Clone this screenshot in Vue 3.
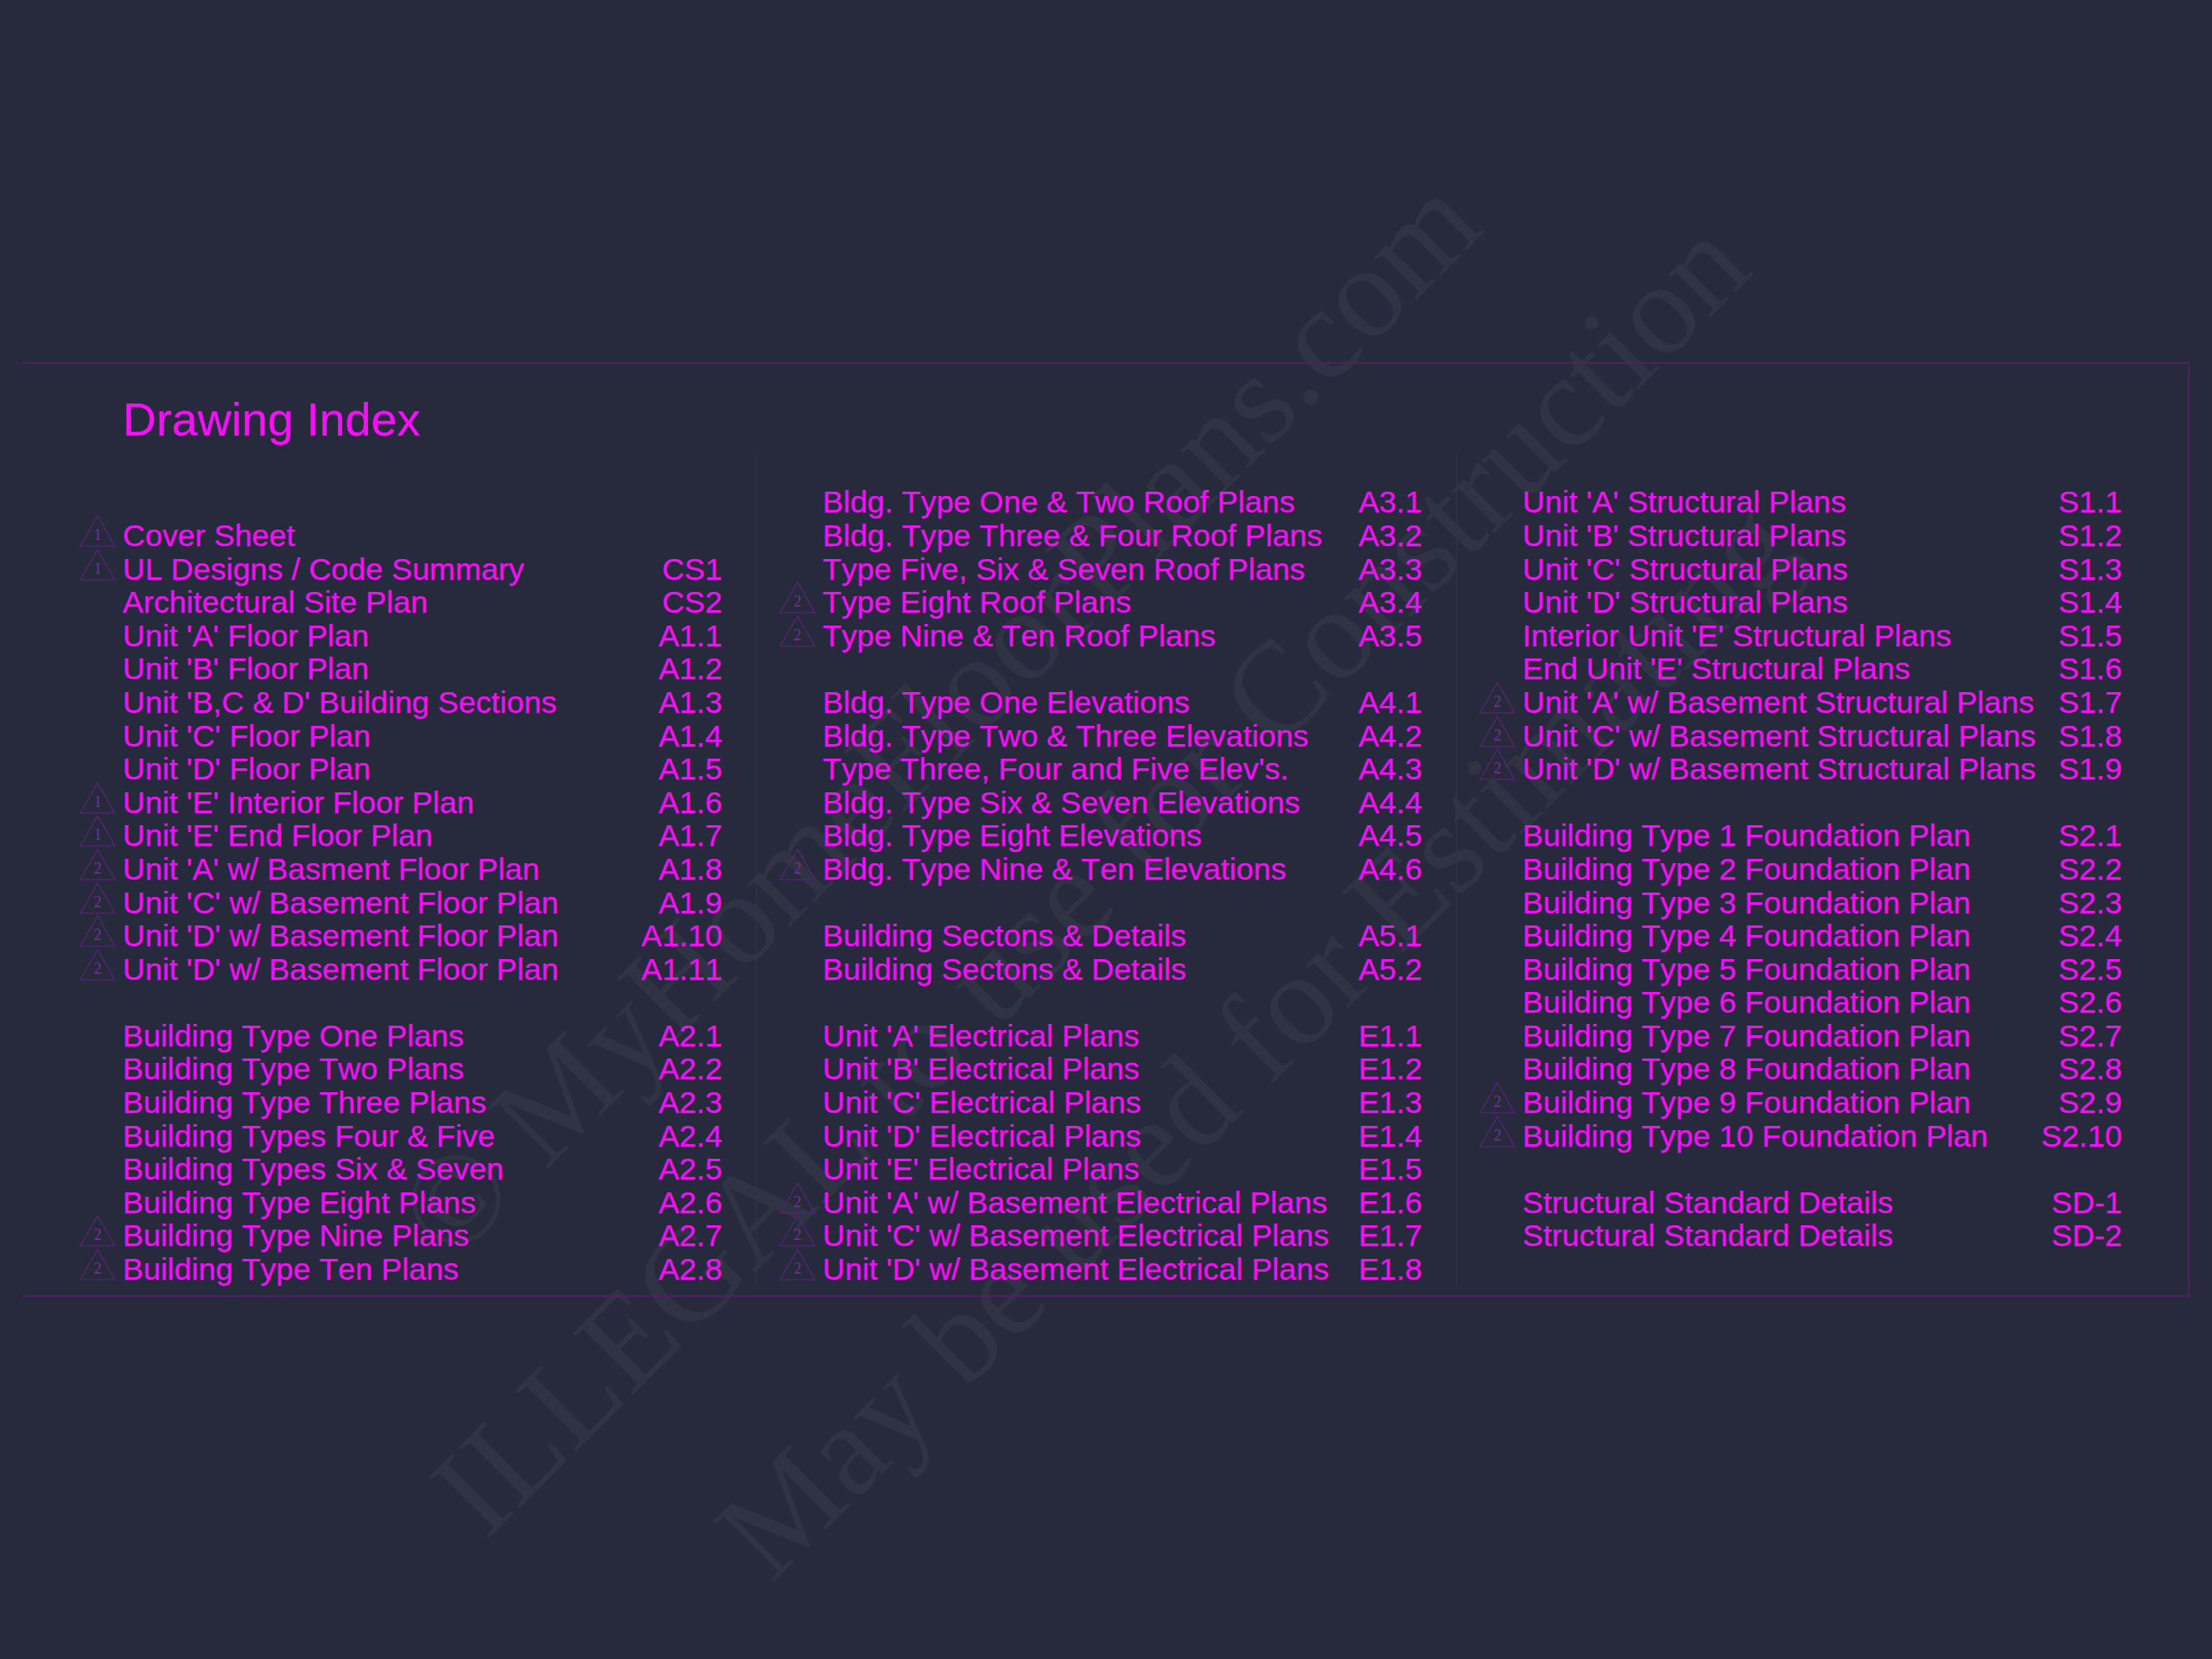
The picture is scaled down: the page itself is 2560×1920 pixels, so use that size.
<script setup>
const col1 = [
  null,
  ['Cover Sheet', '', 1],
  ['UL Designs / Code Summary', 'CS1', 1],
  ['Architectural Site Plan', 'CS2'],
  ["Unit 'A' Floor Plan", 'A1.1'],
  ["Unit 'B' Floor Plan", 'A1.2'],
  ["Unit 'B,C & D' Building Sections", 'A1.3'],
  ["Unit 'C' Floor Plan", 'A1.4'],
  ["Unit 'D' Floor Plan", 'A1.5'],
  ["Unit 'E' Interior Floor Plan", 'A1.6', 1],
  ["Unit 'E' End Floor Plan", 'A1.7', 1],
  ["Unit 'A' w/ Basment Floor Plan", 'A1.8', 2],
  ["Unit 'C' w/ Basement Floor Plan", 'A1.9', 2],
  ["Unit 'D' w/ Basement Floor Plan", 'A1.10', 2],
  ["Unit 'D' w/ Basement Floor Plan", 'A1.11', 2],
  null,
  ['Building Type One Plans', 'A2.1'],
  ['Building Type Two Plans', 'A2.2'],
  ['Building Type Three Plans', 'A2.3'],
  ['Building Types Four & Five', 'A2.4'],
  ['Building Types Six & Seven', 'A2.5'],
  ['Building Type Eight Plans', 'A2.6'],
  ['Building Type Nine Plans', 'A2.7', 2],
  ['Building Type Ten Plans', 'A2.8', 2],
]
const col2 = [
  ['Bldg. Type One & Two Roof Plans', 'A3.1'],
  ['Bldg. Type Three & Four Roof Plans', 'A3.2'],
  ['Type Five, Six & Seven Roof Plans', 'A3.3'],
  ['Type Eight Roof Plans', 'A3.4', 2],
  ['Type Nine & Ten Roof Plans', 'A3.5', 2],
  null,
  ['Bldg. Type One Elevations', 'A4.1'],
  ['Bldg. Type Two & Three Elevations', 'A4.2'],
  ["Type Three, Four and Five Elev's.", 'A4.3'],
  ['Bldg. Type Six & Seven Elevations', 'A4.4'],
  ['Bldg. Type Eight Elevations', 'A4.5'],
  ['Bldg. Type Nine & Ten Elevations', 'A4.6', 2],
  null,
  ['Building Sectons & Details', 'A5.1'],
  ['Building Sectons & Details', 'A5.2'],
  null,
  ["Unit 'A' Electrical Plans", 'E1.1'],
  ["Unit 'B' Electrical Plans", 'E1.2'],
  ["Unit 'C' Electrical Plans", 'E1.3'],
  ["Unit 'D' Electrical Plans", 'E1.4'],
  ["Unit 'E' Electrical Plans", 'E1.5'],
  ["Unit 'A' w/ Basement Electrical Plans", 'E1.6', 2],
  ["Unit 'C' w/ Basement Electrical Plans", 'E1.7', 2],
  ["Unit 'D' w/ Basement Electrical Plans", 'E1.8', 2],
]
const col3 = [
  ["Unit 'A' Structural Plans", 'S1.1'],
  ["Unit 'B' Structural Plans", 'S1.2'],
  ["Unit 'C' Structural Plans", 'S1.3'],
  ["Unit 'D' Structural Plans", 'S1.4'],
  ["Interior Unit 'E' Structural Plans", 'S1.5'],
  ["End Unit 'E' Structural Plans", 'S1.6'],
  ["Unit 'A' w/ Basement Structural Plans", 'S1.7', 2],
  ["Unit 'C' w/ Basement Structural Plans", 'S1.8', 2],
  ["Unit 'D' w/ Basement Structural Plans", 'S1.9', 2],
  null,
  ['Building Type 1 Foundation Plan', 'S2.1'],
  ['Building Type 2 Foundation Plan', 'S2.2'],
  ['Building Type 3 Foundation Plan', 'S2.3'],
  ['Building Type 4 Foundation Plan', 'S2.4'],
  ['Building Type 5 Foundation Plan', 'S2.5'],
  ['Building Type 6 Foundation Plan', 'S2.6'],
  ['Building Type 7 Foundation Plan', 'S2.7'],
  ['Building Type 8 Foundation Plan', 'S2.8'],
  ['Building Type 9 Foundation Plan', 'S2.9', 2],
  ['Building Type 10 Foundation Plan', 'S2.10', 2],
  null,
  ['Structural Standard Details', 'SD-1'],
  ['Structural Standard Details', 'SD-2'],
]
const columns = [col1, col2, col3]
</script>

<template>
  <div class="page">
    <div class="marks">
      <span class="mark mark-a">© MyHomeFloorPlans.com</span>
      <span class="mark mark-b">ILLEGAL to use for Construction</span>
      <span class="mark mark-c">May be used for Estimating</span>
    </div>
    <section class="frame">
      <h1 class="title">Drawing Index</h1>
      <div class="columns">
        <div v-for="(col, c) in columns" :key="c" class="col">
          <div v-for="(row, r) in col" :key="r" class="row">
            <template v-if="row">
              <span class="slot">
                <svg v-if="row[2]" class="tri" viewBox="0 0 42 37" width="42" height="37">
                  <path d="M21 1 L41 36 L1 36 Z" />
                  <text x="21" y="29">{{ row[2] }}</text>
                </svg>
              </span>
              <span class="label">{{ row[0] }}</span>
              <span class="code">{{ row[1] }}</span>
            </template>
          </div>
        </div>
      </div>
    </section>
  </div>
</template>

<style>
html, body { background: #272a3c; }
</style>

<style scoped>
.page {
  position: relative;
  min-height: 1920px;
  width: 2560px;
  padding: 419px 0 0 26px;
  box-sizing: border-box;
  background: #272a3c;
  overflow: hidden;
  font-family: "Liberation Sans", Arial, sans-serif;
  font-kerning: none;
  color: #f410f4;
  -webkit-text-stroke: 0.25px currentColor;
}
.marks { position: absolute; inset: 0; -webkit-text-stroke: 0; }
.mark {
  position: absolute;
  white-space: nowrap;
  font-family: "Liberation Serif", "Times New Roman", serif;
  font-size: 152px;
  line-height: 1;
  color: #2f3344;
  transform: rotate(-45deg);
  transform-origin: 0 100%;
}
.mark-a { left: 540px; top: 1330px; }
.mark-b { left: 580px; top: 1650px; }
.mark-c { left: 910px; top: 1700px; }
.frame {
  position: relative;
  box-sizing: border-box;
  width: 2508px;
  height: 1082px;
  padding: 34px 0 0 40px;
  border-top: 2px solid #4a2460;
  border-right: 2px solid #4a2460;
  border-bottom: 2px solid #4a2460;
}
.title {
  margin: 0 0 10px;
  padding-left: 76px;
  font-size: 53.9px;
  line-height: 60px;
  font-weight: 400;
  color: #f80ef8;
}
.columns {
  display: grid;
  grid-template-columns: repeat(3, 810px);
  height: 935px;
}
.col { padding-top: 37.4px; }
.col + .col { box-shadow: -1px 0 0 #4e2548; }
.row {
  display: flex;
  align-items: flex-start;
  height: 38.6px;
  padding-right: 40px;
  font-size: 35.9px;
  line-height: 38.6px;
  white-space: nowrap;
}
.slot {
  flex: none;
  display: flex;
  justify-content: flex-end;
  width: 76px;
  height: 38.6px;
  padding-right: 8px;
  box-sizing: border-box;
}
.tri { flex: none; margin-top: -5px; overflow: visible; }
.tri path { fill: none; stroke: #4e2668; stroke-width: 1.6; }
.tri text {
  font-family: "Liberation Serif", serif;
  font-size: 18px;
  text-anchor: middle;
  fill: #762f95;
  -webkit-text-stroke: 0;
}
.label { flex: 1; }
.code { flex: none; }
</style>
